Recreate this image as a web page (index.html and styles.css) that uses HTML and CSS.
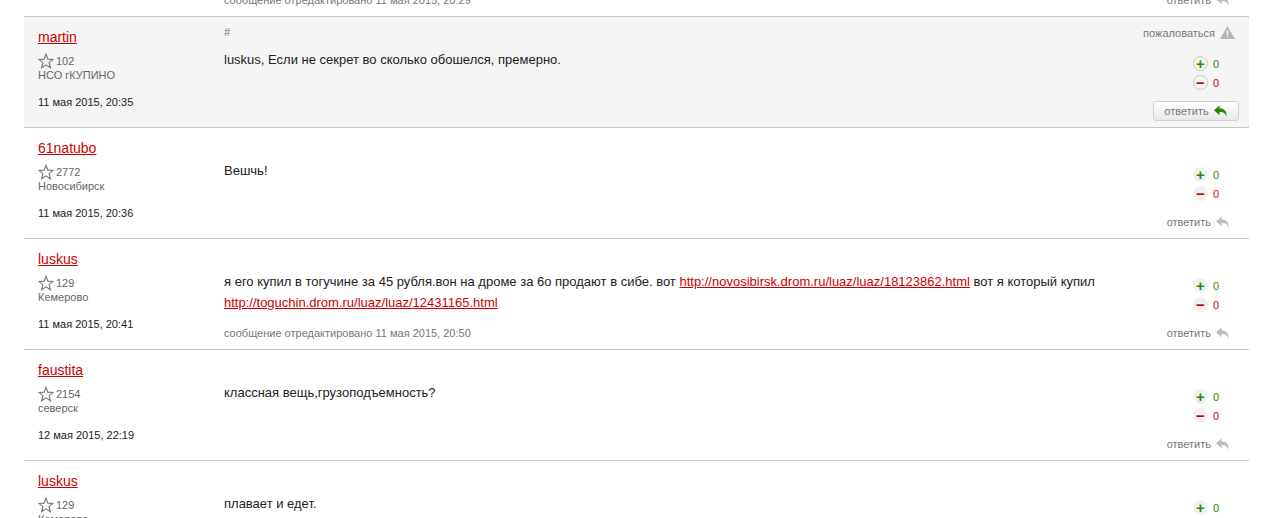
FILE: index.html
```html
<!DOCTYPE html>
<html lang="ru">
<head>
    <meta charset="UTF-8">
    <title>Комментарии</title>
    <link rel="stylesheet" href="styles.css">
</head>
<body>
    <svg class="defs" width="0" height="0">
        <symbol id="star" viewBox="0 0 16 16">
            <path d="M8 1.2l1.9 4.9 5.2.3-4 3.3 1.3 5.1L8 11.9l-4.4 2.9 1.3-5.1-4-3.3 5.2-.3z" fill="none" stroke="currentColor" stroke-width="1.1"/>
        </symbol>
        <symbol id="arrow" viewBox="0 0 16 14">
            <path d="M7 1L1 6.2 7 11.5V8.2c3.6-.2 5.900.8 7.300 4.800C15 7.800 12.500 4.200 7 4.100z" fill="currentColor"/>
        </symbol>
    </svg>

    <div class="comments">
        <div class="comment">
            <div class="author"></div>
            <div class="body">
                <div class="text"></div>
                <div class="edited">сообщение отредактировано 11 мая 2015, 20:29</div>
            </div>
            <div class="side">
                <a class="reply">ответить <svg class="reply-icon"><use href="#arrow"/></svg></a>
            </div>
        </div>

        <div class="comment active">
            <div class="author">
                <a class="name">martin</a>
                <div class="rating"><svg class="star"><use href="#star"/></svg> 102</div>
                <div class="city">НСО гКУПИНО</div>
                <div class="date">11 мая 2015, 20:35</div>
            </div>
            <div class="body">
                <div class="hash">#</div>
                <div class="text">luskus, Если не секрет во сколько обошелся, премерно.</div>
            </div>
            <div class="side">
                <a class="complain">пожаловаться
                    <svg class="warn" viewBox="0 0 16 14"><path d="M8 0l8 14H0z" fill="#b5b5b5"/><path d="M7.200 4.500h1.600v5H7.200zM7.200 10.500h1.600v1.600H7.200z" fill="#f5f5f5"/></svg>
                </a>
                <div class="votes">
                    <div class="vote plus"><span class="vote-btn">+</span> 0</div>
                    <div class="vote minus"><span class="vote-btn">−</span> 0</div>
                </div>
                <a class="reply reply-btn">ответить <svg class="reply-icon"><use href="#arrow"/></svg></a>
            </div>
        </div>

        <div class="comment">
            <div class="author">
                <a class="name">61natubo</a>
                <div class="rating"><svg class="star"><use href="#star"/></svg> 2772</div>
                <div class="city">Новосибирск</div>
                <div class="date">11 мая 2015, 20:36</div>
            </div>
            <div class="body">
                <div class="hash"></div>
                <div class="text">Вешчь!</div>
            </div>
            <div class="side">
                <div class="complain"></div>
                <div class="votes">
                    <div class="vote plus"><span class="vote-btn">+</span> 0</div>
                    <div class="vote minus"><span class="vote-btn">−</span> 0</div>
                </div>
                <a class="reply">ответить <svg class="reply-icon"><use href="#arrow"/></svg></a>
            </div>
        </div>

        <div class="comment">
            <div class="author">
                <a class="name">luskus</a>
                <div class="rating"><svg class="star"><use href="#star"/></svg> 129</div>
                <div class="city">Кемерово</div>
                <div class="date">11 мая 2015, 20:41</div>
            </div>
            <div class="body">
                <div class="hash"></div>
                <div class="text">я его купил в тогучине за 45 рубля.вон на дроме за 6о продают в сибе. вот <a href="#">http://novosibirsk.drom.ru/luaz/luaz/18123862.html</a> вот я который купил <a href="#">http://toguchin.drom.ru/luaz/luaz/12431165.html</a></div>
                <div class="edited">сообщение отредактировано 11 мая 2015, 20:50</div>
            </div>
            <div class="side">
                <div class="complain"></div>
                <div class="votes">
                    <div class="vote plus"><span class="vote-btn">+</span> 0</div>
                    <div class="vote minus"><span class="vote-btn">−</span> 0</div>
                </div>
                <a class="reply">ответить <svg class="reply-icon"><use href="#arrow"/></svg></a>
            </div>
        </div>

        <div class="comment">
            <div class="author">
                <a class="name">faustita</a>
                <div class="rating"><svg class="star"><use href="#star"/></svg> 2154</div>
                <div class="city">северск</div>
                <div class="date">12 мая 2015, 22:19</div>
            </div>
            <div class="body">
                <div class="hash"></div>
                <div class="text">классная вещь,грузоподъемность?</div>
            </div>
            <div class="side">
                <div class="complain"></div>
                <div class="votes">
                    <div class="vote plus"><span class="vote-btn">+</span> 0</div>
                    <div class="vote minus"><span class="vote-btn">−</span> 0</div>
                </div>
                <a class="reply">ответить <svg class="reply-icon"><use href="#arrow"/></svg></a>
            </div>
        </div>

        <div class="comment">
            <div class="author">
                <a class="name">luskus</a>
                <div class="rating"><svg class="star"><use href="#star"/></svg> 129</div>
                <div class="city">Кемерово</div>
                <div class="date">14 мая 2015, 10:02</div>
            </div>
            <div class="body">
                <div class="hash"></div>
                <div class="text">плавает и едет.</div>
            </div>
            <div class="side">
                <div class="complain"></div>
                <div class="votes">
                    <div class="vote plus"><span class="vote-btn">+</span> 0</div>
                    <div class="vote minus"><span class="vote-btn">−</span> 0</div>
                </div>
            </div>
        </div>
    </div>
</body>
</html>
```

FILE: styles.css
```css
* {
    margin: 0;
    padding: 0;
    box-sizing: border-box;
}
html, body {
    height: 518px;
    overflow: hidden;
}
body {
    background-color: #fff;
    font-family: "Liberation Sans", Arial, sans-serif;
    font-size: 12px;
    color: #222;
}
.defs {
    display: block;
}
.comments {
    margin: -94px 15px 0 24px;
}
.comment {
    height: 111px;
    display: grid;
    grid-template-columns: 200px 1fr 100px;
    border-bottom: 1px solid #c8c8c8;
}
.comment.active {
    background-color: #f5f5f5;
}

/* author */
.author {
    padding: 12px 0 0 14px;
}
.name {
    display: block;
    font-size: 14px;
    line-height: 16px;
    color: #c00;
    text-decoration: underline;
}
.rating {
    display: flex;
    align-items: center;
    gap: 2px;
    margin-top: 8px;
    height: 16px;
    font-size: 11px;
    color: #666;
}
.star {
    width: 16px;
    height: 16px;
    color: #777;
}
.city {
    font-size: 11px;
    line-height: 13px;
    color: #666;
}
.date {
    margin-top: 14px;
    font-size: 11px;
    line-height: 13px;
    color: #222;
}

/* text */
.body {
    display: flex;
    flex-direction: column;
    padding-top: 9px;
}
.hash {
    height: 13px;
    font-size: 11px;
    line-height: 13px;
    color: #777;
}
.text {
    margin-top: 10px;
    width: 900px;
    font-size: 13px;
    line-height: 21px;
    color: #222;
}
.text a {
    color: #c00;
}
.edited {
    margin-top: auto;
    padding-bottom: 9px;
    font-size: 11px;
    line-height: 13px;
    color: #777;
}

/* right column */
.side {
    display: flex;
    flex-direction: column;
    align-items: flex-end;
    padding: 9px 14px 0 0;
    position: relative;
}
.complain {
    display: flex;
    align-items: center;
    gap: 5px;
    height: 13px;
    font-size: 11px;
    color: #777;
    white-space: nowrap;
}
.warn {
    width: 15px;
    height: 13px;
}
.votes {
    align-self: flex-start;
    margin: 15px 0 0 44px;
}
.vote {
    display: flex;
    align-items: center;
    gap: 5px;
    height: 19px;
    font-size: 11px;
}
.vote.plus {
    color: #2a8a00;
}
.vote.minus {
    color: #c00;
}
.vote-btn {
    width: 15px;
    height: 15px;
    border-radius: 50%;
    background-color: #f0f0f0;
    display: flex;
    align-items: center;
    justify-content: center;
    font-size: 15px;
    font-weight: bold;
    line-height: 15px;
}
.active .vote-btn {
    background-color: #f5f5f5;
    border: 1px solid #c8c8c8;
}
.reply {
    position: absolute;
    right: 19px;
    bottom: 9px;
    display: flex;
    align-items: center;
    gap: 4px;
    font-size: 11px;
    color: #777;
    white-space: nowrap;
}
.reply-icon {
    width: 15px;
    height: 14px;
    color: #bdbdbd;
}
.reply-btn {
    right: 10px;
    bottom: 6px;
    width: 86px;
    height: 20px;
    justify-content: center;
    border: 1px solid #d0d0d0;
    border-radius: 3px;
    background: linear-gradient(to bottom, #fff, #e8e8e8);
}
.reply-btn .reply-icon {
    color: #2a8a00;
}
```
